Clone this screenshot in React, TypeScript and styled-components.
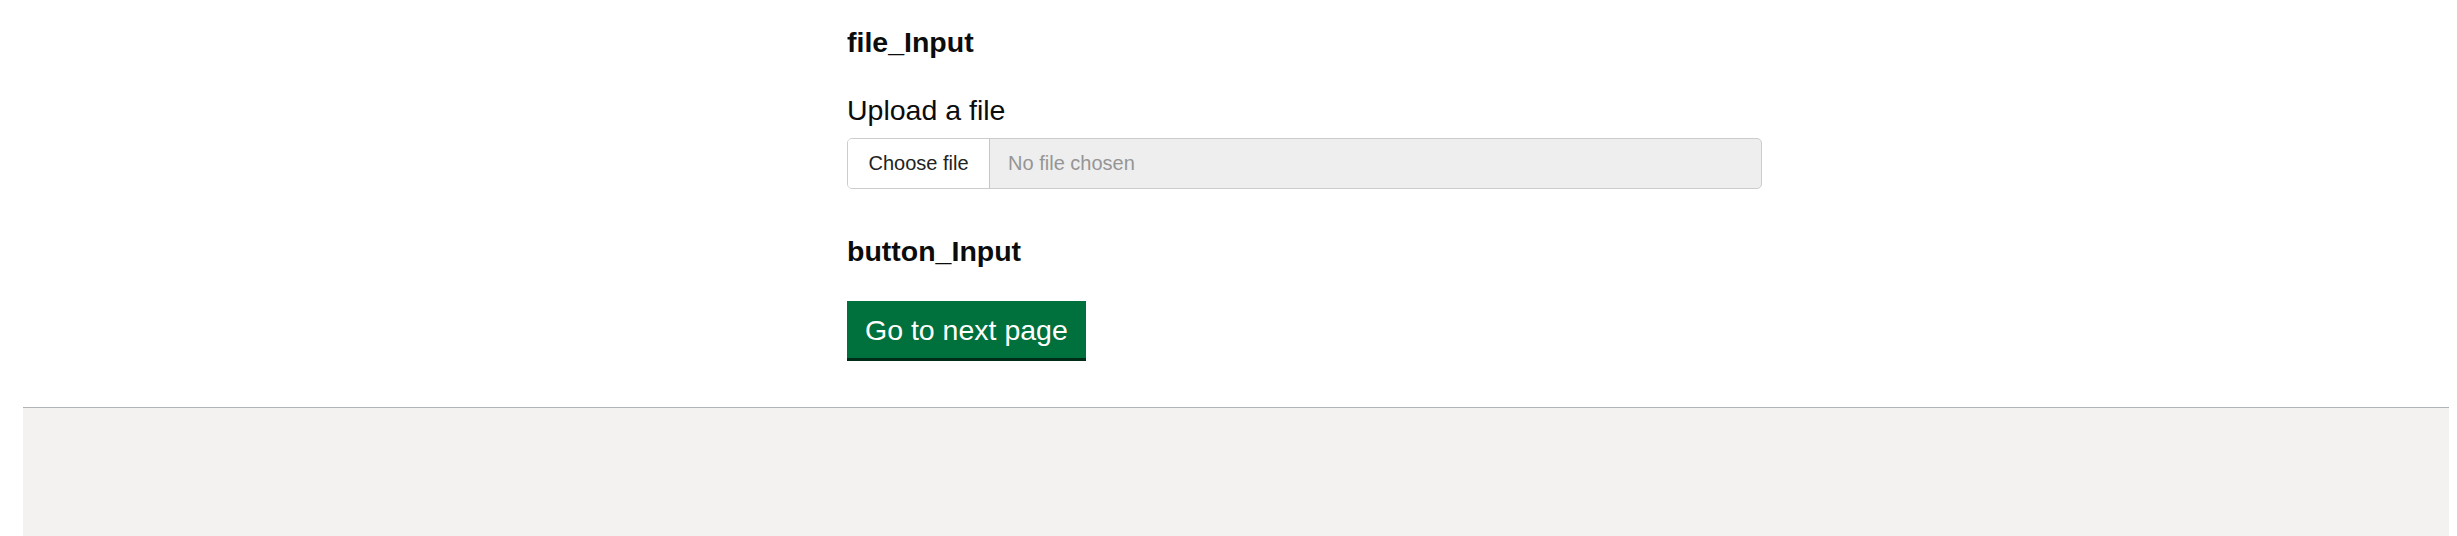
import React from "react";
import styled, { createGlobalStyle } from "styled-components";

const GlobalStyle = createGlobalStyle`
  *, *::before, *::after { box-sizing: border-box; }
  html, body { margin: 0; padding: 0; background: #ffffff; }
  body {
    font-family: "Liberation Sans", Arial, sans-serif;
    color: #0b0c0c;
    overflow: hidden;
  }
`;

const Main = styled.main`
  display: flex;
  flex-direction: column;
  align-items: flex-start;
  padding: 24px 0 49.5px 847px;
`;

const Heading = styled.h2`
  margin: 0 0 30px;
  font-size: 28.5px;
  line-height: 37.5px;
  font-weight: 700;
  color: #0b0c0c;
`;

const Section = styled.section<{ $gap: number }>`
  display: flex;
  flex-direction: column;
  align-items: flex-start;
  margin-bottom: ${(p) => p.$gap}px;
`;

const Label = styled.label`
  display: block;
  margin: 0 0 8.5px;
  font-size: 28.5px;
  line-height: 37.5px;
  font-weight: 400;
  color: #0b0c0c;
`;

const FileField = styled.label`
  display: flex;
  align-items: stretch;
  width: 915px;
  height: 51px;
  border: 1px solid #cccccc;
  border-radius: 5px;
  overflow: hidden;
  background: #eeeeee;
  cursor: pointer;
  font-size: 20px;
`;

const HiddenInput = styled.input`
  display: none;
`;

const ChooseButton = styled.span`
  display: flex;
  align-items: center;
  padding: 0 20.5px;
  background: #ffffff;
  border-right: 1px solid #c6c6c6;
  color: #222222;
  white-space: nowrap;
`;

const FileName = styled.span`
  display: flex;
  align-items: center;
  padding: 0 18px;
  color: #959595;
  white-space: nowrap;
`;

const Button = styled.button`
  margin: 0;
  padding: 12px 15px 10.5px;
  border: 3px solid transparent;
  border-radius: 0;
  background: #00703c;
  box-shadow: 0 3px 0 #002d18;
  color: #ffffff;
  font-family: "Liberation Sans", Arial, sans-serif;
  font-size: 28.5px;
  line-height: 1;
  font-weight: 400;
  cursor: pointer;
`;

const Footer = styled.footer`
  height: 130px;
  margin: 0 8px 0 23px;
  border-top: 1px solid #b1b4b6;
  background: #f3f2f1;
`;

export default function App() {
  return (
    <>
      <GlobalStyle />
      <Main>
        <Section $gap={44.5}>
          <Heading>file_Input</Heading>
          <Label htmlFor="file-upload">Upload a file</Label>
          <FileField>
            <HiddenInput id="file-upload" type="file" />
            <ChooseButton>Choose file</ChooseButton>
            <FileName>No file chosen</FileName>
          </FileField>
        </Section>
        <Section $gap={0}>
          <Heading>button_Input</Heading>
          <Button type="button">Go to next page</Button>
        </Section>
      </Main>
      <Footer />
    </>
  );
}
